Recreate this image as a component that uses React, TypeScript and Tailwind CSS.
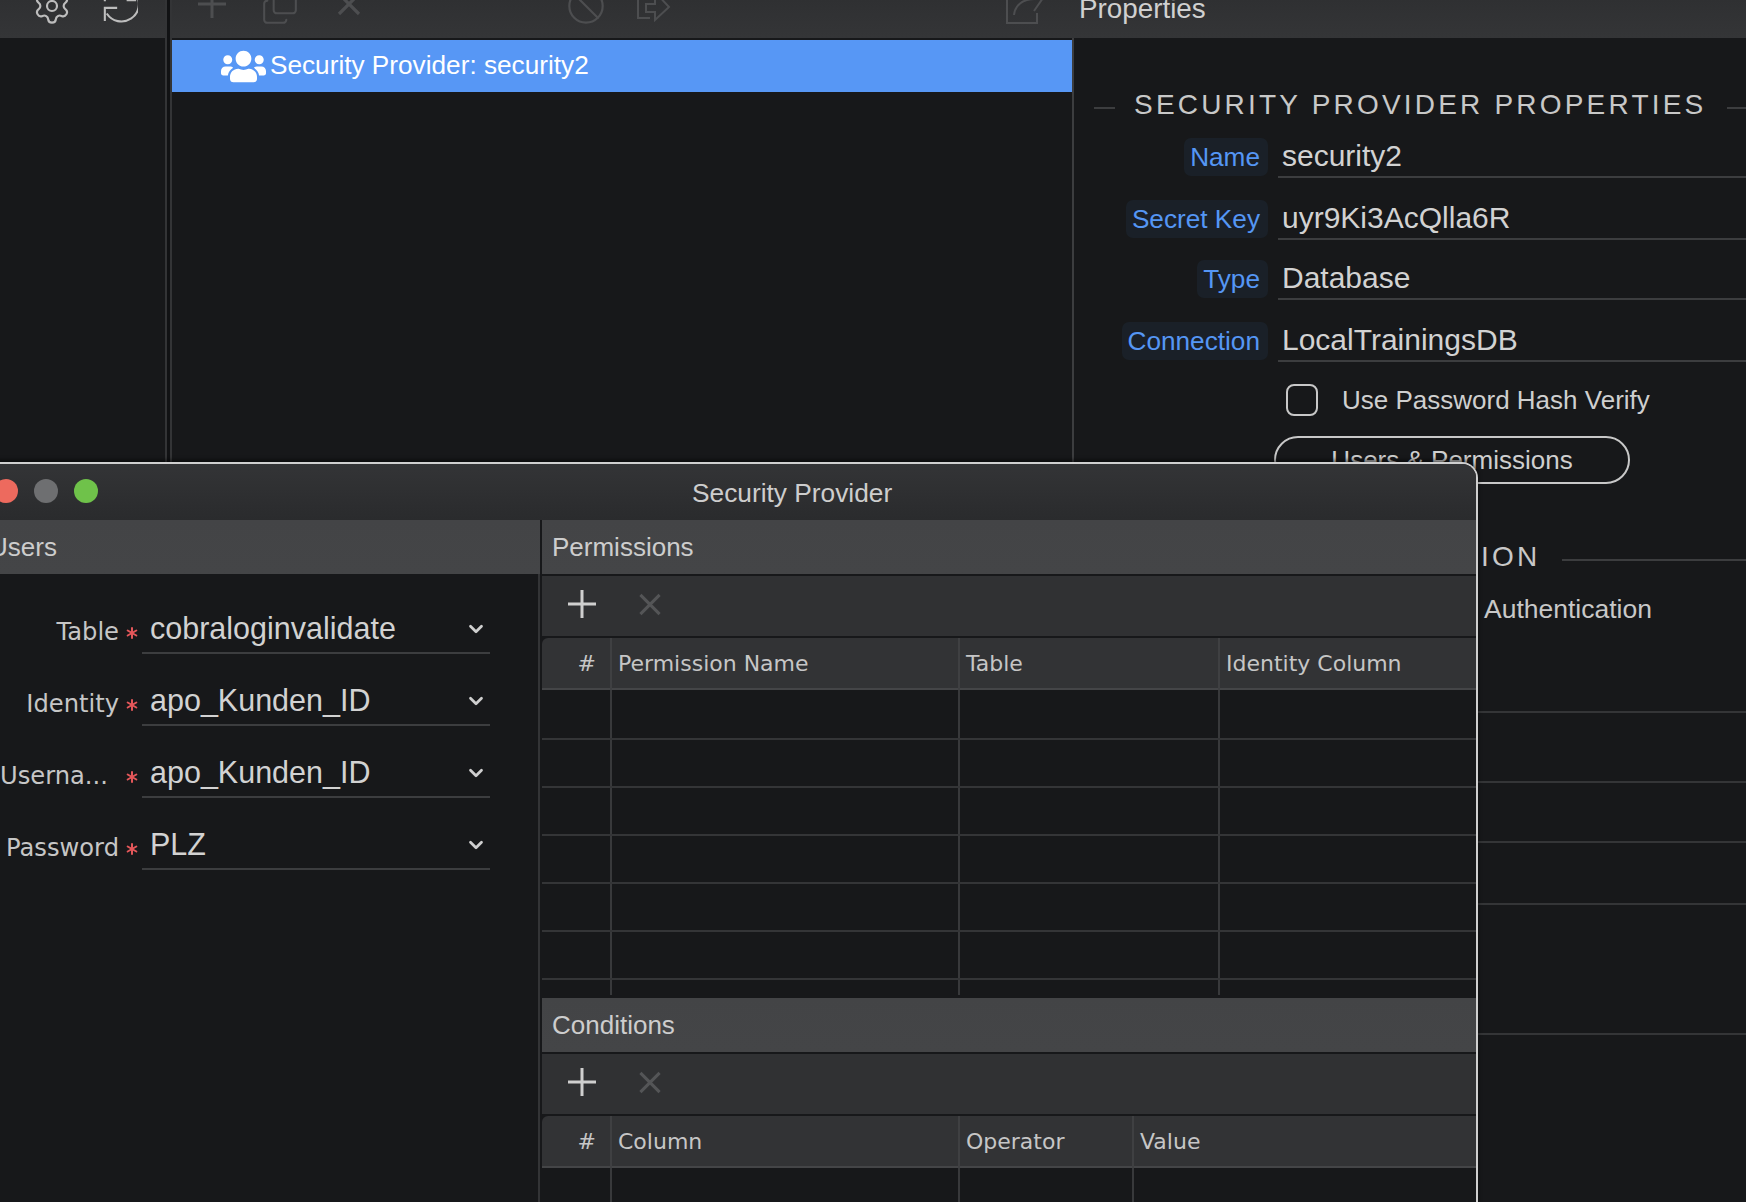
import { Asterisk, Ban, ChevronDown, Copy, Settings } from "lucide-react";
import { FaUsers } from "react-icons/fa";

const PlusMark = ({ className }: { className: string }) => (
  <svg viewBox="0 0 28 28" className={className} fill="none" stroke="currentColor" strokeWidth="3">
    <path d="M14 0V28M0 14H28" />
  </svg>
);

const XMark = ({ className }: { className: string }) => (
  <svg viewBox="0 0 24 24" className={className} fill="none" stroke="currentColor" strokeWidth="3.2">
    <path d="M2 2L22 22M22 2L2 22" />
  </svg>
);

// Section title with a rule on both sides
function Heading({ title, left }: { title: string; left: string }) {
  return (
    <div className="flex h-[32px] items-center">
      <div className={`h-[2px] bg-[#3c3d3f] ${left}`} />
      <div className="text-[28px] tracking-[3.2px] text-[#c8c8c8] whitespace-nowrap ml-[19px] mr-[21px] mb-[6px]">{title}</div>
      <div className="h-[2px] flex-1 bg-[#3c3d3f]" />
    </div>
  );
}

function PropRow({ label, value, gap }: { label: string; value: string; gap: string }) {
  return (
    <div className={`flex h-[40px] ${gap}`}>
      <div className="flex w-[194px] justify-end">
        <div className="h-[38px] rounded-[7px] bg-[#1a2028] pl-[6px] pr-[8px] text-[26.2px] leading-[38px] text-[#5596f4]">{label}</div>
      </div>
      <div className="ml-[10px] flex-1 border-b-2 border-[#3c3d3f] pl-[4px] text-[30px] leading-[36px] text-[#d2d2d2]">{value}</div>
    </div>
  );
}

function UserField({ label, value, pad }: { label: string; value: string; pad: string }) {
  return (
    <div className="flex h-[50px] mb-[22px] items-center">
      <div className={`w-[119px] text-right text-[24.2px] leading-[30px] mt-[6px] whitespace-nowrap font-['DejaVu_Sans'] text-[#c6c6c6] ${pad}`}>{label}</div>
      <div className="flex w-[23px] justify-end mt-[8px]">
        <Asterisk size={20} strokeWidth={2.4} className="text-[#e4575a]" />
      </div>
      <div className="flex h-full w-[348px] items-center justify-between border-b-2 border-[#3c3d3f] pl-[8px] pr-[3px]">
        <span className="text-[30.5px] leading-[44px] text-[#d2d2d2]">{value}</span>
        <ChevronDown size={22} strokeWidth={3} className="text-[#cfcfcf] mt-[2px]" />
      </div>
    </div>
  );
}

function Section({ title, tall }: { title: string; tall: string }) {
  return (
    <div className={`flex items-center bg-gradient-to-b from-[#434446] to-[#444547] pl-[10px] text-[26px] text-[#cdcdcd] ${tall}`}>{title}</div>
  );
}

function ActionBar() {
  return (
    <div className="mt-[2px] flex h-[60px] items-center bg-[#303133] pb-[4px]">
      <PlusMark className="ml-[26px] h-[28px] w-[28px] text-[#cfcfcf]" />
      <XMark className="ml-[42px] h-[23px] w-[24px] text-[#545557]" />
    </div>
  );
}

function GridTable({ cols, heads, rows, tail }: { cols: string; heads: string[]; rows: number; tail: string }) {
  return (
    <div className="mt-[2px] font-['DejaVu_Sans']">
      <div className={`grid h-[52px] ${cols} rounded-tl-[6px] border-b-2 border-[#444547] bg-[#323335]`}>
        {heads.map((h, i) => (
          <div
            key={h}
            className={
              i === 0
                ? "border-r-2 border-[#3f4042] pr-[14px] text-right text-[22px] leading-[52px] text-[#c6c6c6]"
                : "border-r-2 border-[#3f4042] pl-[6px] text-[22px] leading-[52px] text-[#c6c6c6] last:border-r-0"
            }
          >
            {h}
          </div>
        ))}
      </div>
      <div>
        {Array.from({ length: rows }).map((_, r) => (
          <div key={r} className={`grid h-[48px] first:h-[50px] ${cols} border-b-2 border-[#343537]`}>
            {heads.map((h) => (
              <div key={h} className="border-r-2 border-[#38393b] last:border-r-0" />
            ))}
          </div>
        ))}
      </div>
      <div className={`grid ${tail} ${cols}`}>
        {heads.map((h) => (
          <div key={h} className="border-r-2 border-[#38393b] last:border-r-0" />
        ))}
      </div>
    </div>
  );
}

export default function App() {
  return (
    <div className="relative flex h-[1202px] w-[1746px] overflow-hidden bg-[#17181a] font-['Liberation_Sans',sans-serif]">
      {/* left rail */}
      <div className="w-[165px]">
        <div className="flex h-[38px] items-end overflow-hidden bg-gradient-to-b from-[#2f3032] to-[#343537] text-[#bdbdbd]">
          <Settings size={40} strokeWidth={1.3} className="ml-[32px] mb-[12px] shrink-0" />
          <svg viewBox="0 0 38 38" className="ml-[30px] mb-[14px] h-[38px] w-[36px] shrink-0" fill="none" stroke="currentColor" strokeWidth="2.2">
            <path d="M36 8A17 17 0 0 1 5 28" />
            <path d="M3 36V22H16" />
            <path d="M26 14H36M3 8V15" />
          </svg>
        </div>
      </div>
      <div className="h-full w-[7px] border-x-2 border-[#333436] bg-[#111214]" />

      <div className="flex w-[1574px] flex-col">
        {/* shared toolbar */}
        <div className="flex h-[38px] items-end overflow-hidden bg-gradient-to-b from-[#2f3032] to-[#343537] text-[#4d4e50]">
          <PlusMark className="ml-[26px] mb-[20px] h-[28px] w-[28px] shrink-0" />
          <Copy size={38} strokeWidth={1.3} className="ml-[35px] mb-[12px] shrink-0 -scale-y-100" />
          <XMark className="ml-[38px] mb-[22px] h-[24px] w-[24px] shrink-0" />
          <Ban size={40} strokeWidth={1.3} className="ml-[205px] mb-[12px] shrink-0" />
          <svg viewBox="0 0 36 36" className="ml-[30px] mb-[16px] h-[36px] w-[36px] shrink-0" fill="none" stroke="currentColor" strokeWidth="2">
            <path d="M13 6H2V32H14" />
            <path d="M10 18H19V6L33 21L19 34V26H10Z" />
          </svg>
          <svg viewBox="0 0 40 40" className="ml-[333px] mb-[13px] h-[40px] w-[40px] shrink-0" fill="none" stroke="currentColor" strokeWidth="2">
            <path d="M22 8H2V38H32V28" />
            <path d="M9 30C10 20 18 14 30 14" />
            <path d="M25 4L38 13L29 26" />
          </svg>
          <div className="ml-[34px] mb-[13px] text-[27.8px] leading-[32px] text-[#d0d0d0]">Properties</div>
        </div>

        <div className="flex flex-1">
          {/* tree */}
          <div className="w-[900px]">
            <div className="mt-[2px] flex h-[52px] items-center bg-[#5797f5] pl-[49px] text-white">
              <FaUsers size={45} className="shrink-0" />
              <span className="ml-[4px] mb-[2px] text-[26.2px] leading-[32px]">Security Provider: security2</span>
            </div>
          </div>

          {/* properties */}
          <div className="flex-1 border-l-2 border-[#3c3d3f] pt-[54px]">
            <Heading title="SECURITY PROVIDER PROPERTIES" left="ml-[20px] w-[21px]" />
            <div className="mt-[14px]">
              <PropRow label="Name" value="security2" gap="mb-[22px]" />
              <PropRow label="Secret Key" value="uyr9Ki3AcQlla6R" gap="mb-[20px]" />
              <PropRow label="Type" value="Database" gap="mb-[22px]" />
              <PropRow label="Connection" value="LocalTrainingsDB" gap="mb-[22px]" />
            </div>
            <div className="flex h-[32px] items-center">
              <div className="ml-[212px] h-[32px] w-[32px] rounded-[8px] border-2 border-[#c8c8c8]" />
              <span className="ml-[24px] text-[26px] leading-[34px] text-[#cfcfcf]">Use Password Hash Verify</span>
            </div>
            <div className="ml-[200px] mt-[20px] flex h-[48px] w-[356px] items-center justify-center rounded-full border-2 border-[#c8c8c8] text-[26px] text-[#cfcfcf]">
              Users &amp; Permissions
            </div>
            <div className="mt-[60px]">
              <Heading title="AUTHENTICATION" left="ml-[159px] w-[0px]" />
            </div>
            <div className="ml-[410px] mt-[16px] text-[26.5px] leading-[34px] text-[#c8c8c8]">Authentication</div>
            <div className="mt-[85px] h-[2px] bg-[#343537]" />
            <div className="mt-[68px] h-[2px] bg-[#343537]" />
            <div className="mt-[58px] h-[2px] bg-[#343537]" />
            <div className="mt-[60px] h-[2px] bg-[#343537]" />
            <div className="mt-[128px] h-[2px] bg-[#343537]" />
          </div>
        </div>
      </div>

      {/* Security Provider window */}
      <div className="absolute left-[-36px] top-[462px] h-[800px] w-[1514px] rounded-tr-[16px] border-t-2 border-r-2 border-[#cfcfcf] bg-[#17181a] shadow-[0_-2px_4px_rgba(0,0,0,0.6)]">
        <div className="relative flex h-[56px] items-center rounded-tr-[14px] bg-gradient-to-b from-[#333436] to-[#2a2b2d] pl-[30px] pb-[2px]">
          <div className="h-[24px] w-[24px] rounded-full bg-[#ed6a5e]" />
          <div className="ml-[16px] h-[24px] w-[24px] rounded-full bg-[#6e6f71]" />
          <div className="ml-[16px] h-[24px] w-[24px] rounded-full bg-[#6fc24a]" />
          <div className="ml-[594px] mt-[6px] text-[26.3px] text-[#cdcdcd]">Security Provider</div>
        </div>

        <div className="flex">
          {/* users pane */}
          <div className="w-[576px]">
            <Section title="Users" tall="h-[54px] pl-[25px]" />
            <div className="border-r-2 border-[#333436] pl-[36px] pt-[30px] h-[700px]">
              <UserField label="Table" value="cobraloginvalidate" pad="" />
              <UserField label="Identity" value="apo_Kunden_ID" pad="" />
              <UserField label="Userna..." value="apo_Kunden_ID" pad="pr-[21px]" />
              <UserField label="Password" value="PLZ" pad="" />
            </div>
          </div>

          {/* permissions + conditions */}
          <div className="ml-[2px] flex-1">
            <Section title="Permissions" tall="h-[54px]" />
            <ActionBar />
            <GridTable
              cols="grid-cols-[70px_348px_260px_1fr]"
              heads={["#", "Permission Name", "Table", "Identity Column"]}
              rows={6}
              tail="h-[15px]"
            />
            <div className="mt-[3px]">
              <Section title="Conditions" tall="h-[54px]" />
            </div>
            <ActionBar />
            <GridTable
              cols="grid-cols-[70px_348px_174px_1fr]"
              heads={["#", "Column", "Operator", "Value"]}
              rows={1}
              tail="h-[40px]"
            />
          </div>
        </div>
      </div>
    </div>
  );
}
